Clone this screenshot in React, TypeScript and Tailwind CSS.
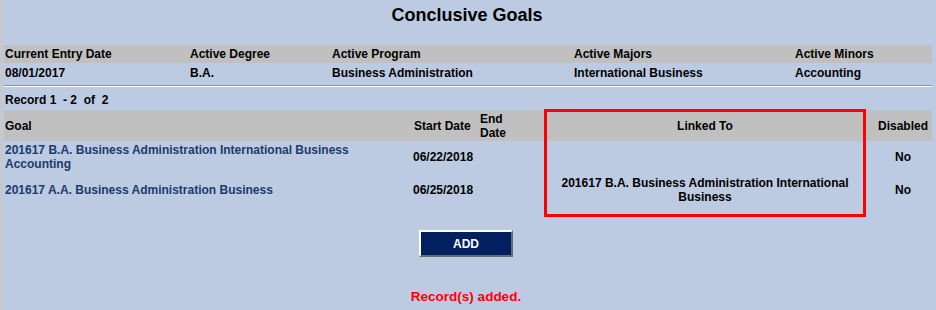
export default function App() {
  const summary = [
    { label: "Current Entry Date", value: "08/01/2017" },
    { label: "Active Degree", value: "B.A." },
    { label: "Active Program", value: "Business Administration" },
    { label: "Active Majors", value: "International Business" },
    { label: "Active Minors", value: "Accounting" },
  ];

  const goals = [
    {
      goal: "201617 B.A. Business Administration International Business Accounting",
      start: "06/22/2018",
      end: "",
      linked: "",
      disabled: "No",
    },
    {
      goal: "201617 A.A. Business Administration Business",
      start: "06/25/2018",
      end: "",
      linked: "201617 B.A. Business Administration International Business",
      disabled: "No",
    },
  ];

  const cols = "grid grid-cols-[406px_68px_66px_322px_66px]";

  return (
    <div className="w-[936px] h-[310px] bg-[#bccbe1] border-l-2 border-[#c8c8c8] font-['Liberation_Sans',Arial,sans-serif] text-[12px] font-bold text-black overflow-hidden">
      <h1 className="text-center text-[18px] leading-[21px] pt-[5px] pr-[4px]">Conclusive Goals</h1>

      <div className="mt-[19px] ml-[2px] w-[928px]">
        {/* Current program summary */}
        <div className="grid grid-cols-[185px_142px_242px_221px_1fr] bg-[#c0c0c0] h-[18px] items-center pl-[1px]">
          {summary.map((s) => (
            <span key={s.label}>{s.label}</span>
          ))}
        </div>
        <div className="grid grid-cols-[185px_142px_242px_221px_1fr] h-[19px] items-center pl-[1px]">
          {summary.map((s) => (
            <span key={s.label}>{s.value}</span>
          ))}
        </div>
        <div className="mt-[3px] border-t border-[#8f8f8f] border-b border-b-white" />

        <p className="mt-[6px] leading-[14px] pl-[1px]">Record 1&nbsp; - 2&nbsp; of&nbsp; 2</p>

        {/* Goals table */}
        <div className="relative mt-[3px]">
          <div className={`${cols} bg-[#c0c0c0] h-[31px] items-center leading-[14px]`}>
            <span className="pl-[1px]">Goal</span>
            <span className="pl-[4px]">Start Date</span>
            <span className="pl-[2px]">
              End
              <br />
              Date
            </span>
            <span className="text-center">Linked To</span>
            <span className="text-center pl-[8px]">Disabled</span>
          </div>
          {goals.map((g) => (
            <div key={g.goal} className={`${cols} items-center leading-[13.5px] py-[3px] min-h-[32px]`}>
              <span className="pl-[1px] pr-[2px] text-[#1c3a6e]">{g.goal}</span>
              <span className="pl-[3px]">{g.start}</span>
              <span className="pl-[2px]">{g.end}</span>
              <span className="text-center px-[12px]">{g.linked}</span>
              <span className="text-center pl-[8px]">{g.disabled}</span>
            </div>
          ))}
          {/* highlight around the Linked To column */}
          <div className="absolute left-[540px] top-[-1px] w-[322px] h-[108px] border-[3px] border-[#ff0000] pointer-events-none" />
        </div>

        <div className="flex justify-center mt-[23px] pr-[4px]">
          <button className="w-[94px] h-[27px] bg-[#002060] text-white text-[12px] font-bold border-2 border-t-white border-l-white border-b-[#6b6b6b] border-r-[#6b6b6b]">
            ADD
          </button>
        </div>

        <p className="mt-[33px] text-center text-[13.5px] leading-[14px] text-[#ff0000] pr-[4px]">Record(s) added.</p>
      </div>
    </div>
  );
}
